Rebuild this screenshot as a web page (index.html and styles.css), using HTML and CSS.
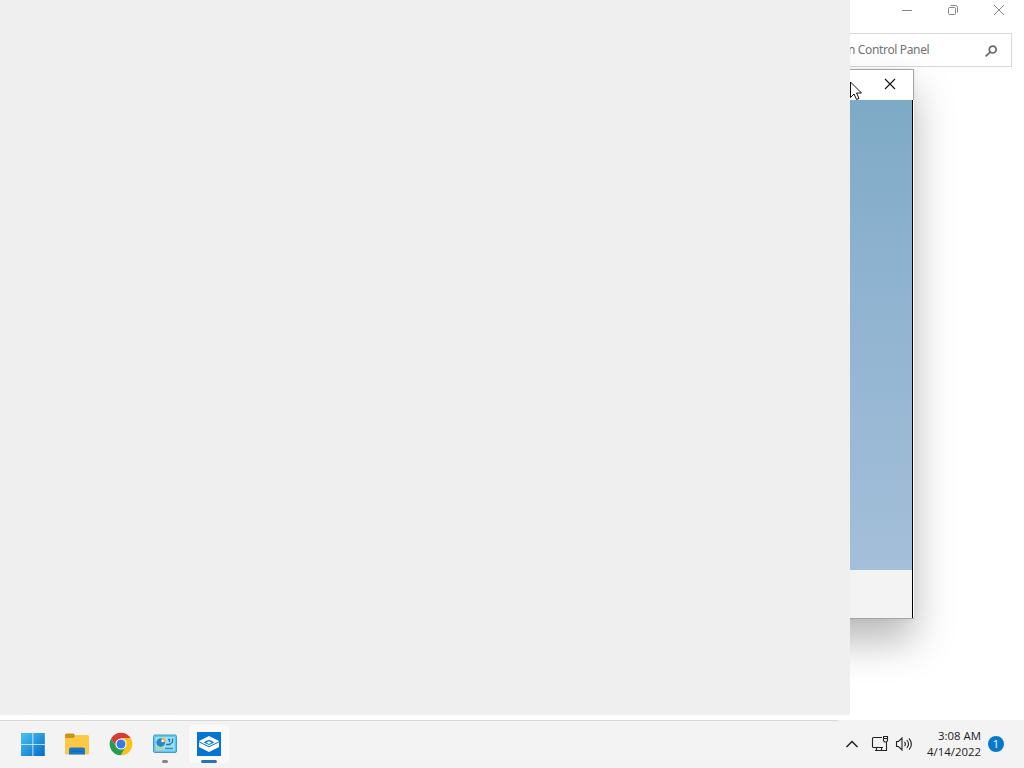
FILE: index.html
```html
<!DOCTYPE html>
<html lang="en">

<head>
    <meta charset="UTF-8">
    <meta name="viewport" content="width=device-width, initial-scale=1.0">
    <title>Desktop</title>
    <link rel="stylesheet" href="styles.css">
</head>

<body>

    <div class="desktop">

        <!-- Control Panel window -->
        <div class="window control-panel">
            <div class="title-bar">
                <svg width="12" height="12" viewBox="0 0 12 12"><path d="M1 6.5h10"/></svg>
                <svg width="12" height="12" viewBox="0 0 12 12"><rect x="1.5" y="3.5" width="7" height="7" rx="1"/><path d="M3.5 1.5h5q2 0 2 2v5"/></svg>
                <svg width="12" height="12" viewBox="0 0 12 12"><path d="M1 1l10 10M11 1L1 11"/></svg>
            </div>
            <div class="search-box">
                <span>n Control Panel</span>
                <svg width="14" height="14" viewBox="0 0 14 14"><circle cx="8.7" cy="5.6" r="3.4"/><path d="M6.2 8.1L1.6 12.3"/></svg>
            </div>
        </div>

        <!-- Sandbox window -->
        <div class="window sandbox">
            <div class="sandbox-title">
                <svg width="12" height="12" viewBox="0 0 12 12"><path d="M1 1l10 10M11 1L1 11"/></svg>
            </div>
            <div class="sandbox-body">
                <div class="sandbox-screen"></div>
                <div class="sandbox-bar"></div>
            </div>
        </div>

        <!-- Mouse pointer -->
        <svg class="pointer" width="13" height="20" viewBox="0 0 13 20"><path d="M.5 1v15.5L4 13l2.6 5.5 2.4-1.1L6.5 12h5z"/></svg>

        <!-- Blank window -->
        <div class="window blank"></div>
    </div>

    <!-- Taskbar -->
    <div class="taskbar">
        <div class="apps">
            <div class="app">
                <svg width="24" height="24" viewBox="0 0 24 24">
                    <defs>
                        <linearGradient id="start" x1="0" y1="0" x2="24" y2="24" gradientUnits="userSpaceOnUse">
                            <stop offset="0" stop-color="#48c6f4"/>
                            <stop offset="1" stop-color="#0669c8"/>
                        </linearGradient>
                    </defs>
                    <path fill="url(#start)" d="M0 1h11.500v11H0zM12.300 1h11.500v11H12.300zM0 12.800h11.500V24H0zM12.300 12.800h11.500V24H12.300z"/>
                </svg>
            </div>
            <div class="app">
                <svg width="26" height="24" viewBox="0 0 26 24">
                    <path fill="#c9921b" d="M1 3q0-1.500 1.500-1.500h7l2 2.500v4H1z"/>
                    <path fill="#fbc945" d="M1 6h8.500l2.500-3h11.500q1.500 0 1.500 1.500V21q0 1.500-1.500 1.500h-21Q1 22.500 1 21z"/>
                    <path fill="#1778c8" d="M5 22.500v-5q0-2 2-2h12q2 0 2 2v5z"/>
                    <path fill="#1267b0" d="M7.500 18.500h11V20h-11z"/>
                </svg>
            </div>
            <div class="app">
                <svg width="24" height="24" viewBox="0 0 24 24">
                    <path fill="#259d50" d="M2.200 6.350A11.300 11.300 0 0 0 12 23.300L16.900 14.800 12 12 7.100 14.800z"/>
                    <path fill="#dd3b30" d="M12 6.350h9.800A11.300 11.300 0 0 0 2.200 6.350L7.100 14.800z"/>
                    <path fill="#fbc116" d="M12 6.350h9.800A11.300 11.300 0 0 1 12 23.300l4.900-8.500z"/>
                    <circle cx="12" cy="12" r="5.600" fill="#fff"/>
                    <circle cx="12" cy="12" r="4.500" fill="#347de5"/>
                </svg>
            </div>
            <div class="app running">
                <svg width="24" height="20" viewBox="0 0 24 20">
                    <rect x=".5" y="1" width="23" height="17.500" rx="1.500" fill="#62c4ed" stroke="#3f9dc6"/>
                    <rect x="2.500" y="3" width="19" height="13.500" fill="#9cdff8"/>
                    <circle cx="7.700" cy="8.500" r="4.300" fill="#2a86c2"/>
                    <path fill="#e9b35a" d="M8.500 8V3.500h1A4 4 0 0 1 13 8z"/>
                    <circle cx="9.700" cy="7" r="1.200" fill="#f5f5f5"/>
                    <path fill="none" stroke="#2077ad" stroke-width="1.300" d="M15 5.500h1.500v2.500M13 10.500h4V9M19.500 4.500v3.500l-1.500 1.500"/>
                    <path stroke="#e5bd52" stroke-width="1.500" d="M3.500 14.500h7"/>
                    <path stroke="#2b8fca" stroke-width="1.500" d="M12 14.500h8"/>
                </svg>
            </div>
            <div class="app active">
                <svg width="24" height="24" viewBox="0 0 24 24">
                    <path fill="#0675cf" d="M0 0h24v24H0z"/>
                    <path fill="#fff" d="M12 4l10 5v6l-10 5-10-5V9z"/>
                    <path fill="none" stroke="#0675cf" d="M2 9.800l10 5 10-5"/>
                    <path fill="#0675cf" d="M6.800 10.500Q9 8 12 8t5.200 2.500L12 13z"/>
                    <path fill="#fff" d="M9.200 10.500L12 9.200l2.800 1.300L12 11.900z"/>
                </svg>
            </div>
        </div>

        <div class="tray">
            <svg class="chevron" width="14" height="10" viewBox="0 0 14 10"><path d="M1.500 8L7 2.500 12.500 8"/></svg>
            <svg class="network" width="18" height="18" viewBox="0 0 18 18"><path d="M11 2.500H2.500q-1 0-1 1v8q0 1 1 1H12M5.500 12.500v3m5-3v3M4 15.500h11.500V7M12.500 1.500h4v4l-1 1.500h-2l-1-1.500zM12.500 3.500h4"/></svg>
            <svg class="volume" width="18" height="16" viewBox="0 0 18 16"><path d="M1.500 5.500h2l3.500-3.500v12l-3.500-3.500h-2zM9.500 5.800q1.800 2.200 0 4.400M11.800 4q3.400 4 0 8M14 2.300q4.800 5.700 0 11.400"/></svg>
            <div class="clock">
                <span>3:08 AM</span>
                <span>4/14/2022</span>
            </div>
            <div class="badge">1</div>
        </div>
    </div>

</body>

</html>
```

FILE: styles.css
```css
/* Global Styles */
* {
    box-sizing: border-box;
}

body {
    font-family: "Open Sans", "Noto Sans", sans-serif;
    margin: 0;
    height: 768px;
    display: flex;
    flex-direction: column;
    overflow: hidden;
    background-color: #fff;
}

svg {
    display: block;
    flex: none;
}

/* Desktop */
.desktop {
    position: relative;
    height: 720px;
    overflow: hidden;
}

.window {
    position: absolute;
}

/* Control Panel */
.control-panel {
    inset: 0;
    background-color: #fff;
}

.title-bar {
    display: flex;
    justify-content: flex-end;
    gap: 34px;
    height: 33px;
    padding: 4px 19px 0 0;
}

.title-bar svg {
    fill: none;
    stroke: #858585;
}

.search-box {
    display: flex;
    align-items: center;
    justify-content: space-between;
    width: 172px;
    height: 34px;
    margin: 0 12px 0 auto;
    padding: 0 13px 1px 7px;
    border: 1px solid #d9d9d9;
    font-family: "Noto Sans", sans-serif;
    font-size: 12px;
    letter-spacing: -0.35px;
    color: #737373;
    white-space: nowrap;
}

.search-box svg {
    margin-top: 2px;
    fill: none;
    stroke: #666;
    stroke-width: 1.7;
}

/* Sandbox */
.sandbox {
    left: 300px;
    top: 69px;
    width: 614px;
    height: 550px;
    display: flex;
    flex-direction: column;
    border: 1px solid #a5a5a5;
    border-right: none;
    background-color: #fff;
    box-shadow: 0 22px 38px rgba(0, 0, 0, 0.28), 0 0 6px rgba(0, 0, 0, 0.06);
}

.sandbox-title {
    display: flex;
    align-items: center;
    justify-content: flex-end;
    height: 30px;
    padding: 0 17px 2px 0;
    border-right: 1px solid #a5a5a5;
}

.sandbox-title svg {
    fill: none;
    stroke: #111;
    stroke-width: 1.1;
}

.sandbox-body {
    flex: 1;
    display: flex;
    flex-direction: column;
    border-right: 1px solid #000;
    margin-right: 1px;
}

.sandbox-screen {
    flex: 1;
    background: linear-gradient(#7daac6, #8bb1ce 30%, #96b7d4 60%, #a4bfd9);
}

.sandbox-bar {
    height: 48px;
    background-color: #f3f3f3;
}

/* Pointer */
.pointer {
    position: absolute;
    left: 850px;
    top: 81px;
    fill: #fff;
    stroke: #111;
}

/* Blank window */
.blank {
    left: 0;
    top: 0;
    width: 850px;
    height: 715px;
    background-color: #efefef;
}

/* Taskbar */
.taskbar {
    display: flex;
    justify-content: space-between;
    height: 48px;
    background: linear-gradient(90deg, #d8d8d8 838px, #f3f3f3 838px) top / 100% 1px no-repeat #f3f3f3;
}

.apps {
    display: flex;
    gap: 4px;
    padding: 5px 0 0 13px;
}

.app {
    display: flex;
    flex-direction: column;
    align-items: center;
    justify-content: center;
    width: 40px;
    height: 38px;
    border-radius: 4px;
}

.running,
.active {
    justify-content: flex-start;
    padding-top: 7px;
}

.running {
    padding-top: 9px;
}

.running::after,
.active::after {
    content: "";
    width: 6px;
    height: 3px;
    margin-top: 6px;
    border-radius: 2px;
    background-color: #858585;
}

.active {
    background-color: #f9f9f9;
}

.active::after {
    width: 16px;
    margin-top: 4px;
    background-color: #2a72b8;
}

/* Tray */
.tray {
    display: flex;
    align-items: center;
    padding-right: 20px;
}

.tray svg {
    fill: none;
    stroke: #222;
    stroke-width: 1.1;
}

.tray .chevron {
    stroke-width: 1.5;
    margin-right: 12px;
}

.network {
    margin-right: 6px;
}

.clock {
    display: flex;
    flex-direction: column;
    width: 68px;
    text-align: right;
    font-size: 11.4px;
    line-height: 16px;
    color: #1c1c1c;
}

.badge {
    width: 16px;
    height: 16px;
    margin-left: 7px;
    border-radius: 50%;
    background-color: #0878cd;
    color: #fff;
    font-size: 11px;
    line-height: 16px;
    text-align: center;
}
```
